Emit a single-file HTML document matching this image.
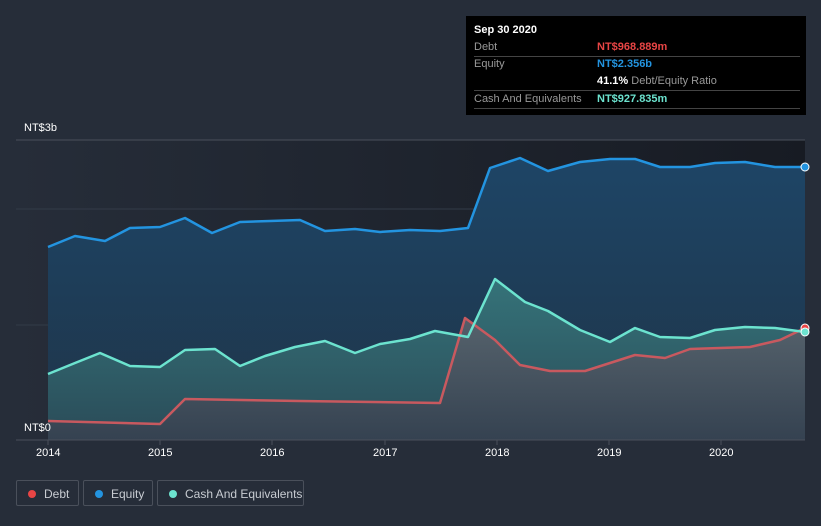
<!DOCTYPE html>
<html><head><meta charset="utf-8"><style>
body{margin:0;width:821px;height:526px;background:#262d39;font-family:"Liberation Sans",sans-serif;overflow:hidden;position:relative}
.tip{position:absolute;left:466px;top:16px;width:340px;height:99px;background:#000;color:#fff;font-size:11px}
.tip .r{position:absolute;left:8px;width:326px;border-bottom:1px solid #444;height:17px;line-height:17px}
.lab{color:#999}
.v{position:absolute;left:123px;top:0;font-weight:bold}
.leg{position:absolute;top:480px;height:26px;border:1px solid #4a505b;border-radius:2px;color:#c8ccd2;font-size:12px;line-height:26px;box-sizing:border-box}
.leg i{display:inline-block;width:8px;height:8px;border-radius:50%;margin:0 8px 0 11px;vertical-align:-0px}
.ax{position:absolute;color:#fff;font-size:11px}
</style></head><body>
<svg width="821" height="526" style="position:absolute;left:0;top:0">
<defs>
<linearGradient id="bg" x1="0" x2="1" y1="0" y2="0"><stop offset="0" stop-color="#262d39"/><stop offset="1" stop-color="#171b23"/></linearGradient>
<linearGradient id="eq" x1="0" x2="0" y1="0" y2="1"><stop offset="0" stop-color="#1e4566"/><stop offset="1" stop-color="#1f3448"/></linearGradient>
<linearGradient id="ca" x1="0" x2="0" y1="0" y2="1"><stop offset="0" stop-color="#357379"/><stop offset="1" stop-color="#2a4b58"/></linearGradient>
<linearGradient id="de" x1="0" x2="0" y1="0" y2="1"><stop offset="0" stop-color="#5a626c"/><stop offset="1" stop-color="#364150"/></linearGradient>
</defs>
<rect x="16" y="140" width="789" height="300" fill="url(#bg)"/>
<line x1="16" y1="140" x2="805" y2="140" stroke="#4a505b"/>
<line x1="16" y1="209" x2="805" y2="209" stroke="#333b48"/>
<line x1="16" y1="325" x2="805" y2="325" stroke="#333b48"/>
<polygon fill="url(#eq)" points="48,440 48,247 75,236 105,241 130,228 160,227 185,218 212,233 240,222 270,221 300,220 325,231 355,229 380,232 410,230 440,231 468,228 490,168 520,158 548,171 580,162 610,159 635,159 660,167 690,167 715,163 745,162 775,167 805,167 805,440"/>
<polygon fill="url(#ca)" points="48,440 48,374 75,363 100,353 130,366 160,367 185,350 215,349 240,366 265,356 295,347 325,341 355,353 380,344 410,339 435,331 468,337 495,279 525,302 548,311 580,330 610,342 635,328 660,337 690,338 715,330 745,327 775,328 805,332 805,440"/>
<polygon fill="url(#de)" fill-opacity="0.9" points="48,440 48,421 160,424 185,399 300,401 440,403 465,318 495,340 520,365 550,371 585,371 610,363 635,355 665,358 690,349 750,347 780,340 805,328 805,440"/>
<g fill="none" stroke-width="2.5" stroke-linejoin="round">
<polyline stroke="#2394e0" points="48,247 75,236 105,241 130,228 160,227 185,218 212,233 240,222 270,221 300,220 325,231 355,229 380,232 410,230 440,231 468,228 490,168 520,158 548,171 580,162 610,159 635,159 660,167 690,167 715,163 745,162 775,167 805,167"/>
<polyline stroke="#c8595f" points="48,421 160,424 185,399 300,401 440,403 465,318 495,340 520,365 550,371 585,371 610,363 635,355 665,358 690,349 750,347 780,340 805,328"/>
<polyline stroke="#6ce3cf" points="48,374 75,363 100,353 130,366 160,367 185,350 215,349 240,366 265,356 295,347 325,341 355,353 380,344 410,339 435,331 468,337 495,279 525,302 548,311 580,330 610,342 635,328 660,337 690,338 715,330 745,327 775,328 805,332"/>
</g>
<circle cx="805" cy="167" r="4" fill="#2394e0" stroke="#fff"/>
<circle cx="805" cy="328" r="4" fill="#e84545" stroke="#fff"/>
<circle cx="805" cy="332" r="4" fill="#6ce3cf" stroke="#fff"/>
<line x1="16" y1="440" x2="805" y2="440" stroke="#4a505b"/>
<g stroke="#4a505b"><line x1="48" y1="440" x2="48" y2="445"/><line x1="160" y1="440" x2="160" y2="445"/><line x1="272" y1="440" x2="272" y2="445"/><line x1="385" y1="440" x2="385" y2="445"/><line x1="497" y1="440" x2="497" y2="445"/><line x1="609" y1="440" x2="609" y2="445"/><line x1="721" y1="440" x2="721" y2="445"/></g>
</svg>
<div class="ax" style="left:24px;top:122px">NT$3b</div>
<div class="ax" style="left:24px;top:422px">NT$0</div>
<div class="ax" style="left:36px;top:447px">2014</div>
<div class="ax" style="left:148px;top:447px">2015</div>
<div class="ax" style="left:260px;top:447px">2016</div>
<div class="ax" style="left:373px;top:447px">2017</div>
<div class="ax" style="left:485px;top:447px">2018</div>
<div class="ax" style="left:597px;top:447px">2019</div>
<div class="ax" style="left:709px;top:447px">2020</div>
<div class="tip">
<div style="position:absolute;left:8px;top:8px;font-weight:bold">Sep 30 2020</div>
<div class="r" style="top:23px"><span class="lab">Debt</span><span class="v" style="color:#e84545">NT$968.889m</span></div>
<div class="r" style="top:40px;height:34px;"><span class="lab">Equity</span><span class="v" style="color:#2394e0">NT$2.356b</span><span class="v" style="top:17px"><b>41.1%</b> <span class="lab" style="font-weight:normal">Debt/Equity Ratio</span></span></div>
<div class="r" style="top:75px"><span class="lab">Cash And Equivalents</span><span class="v" style="color:#6ce3cf">NT$927.835m</span></div>
</div>
<div class="leg" style="left:16px;width:63px"><i style="background:#e84545"></i>Debt</div>
<div class="leg" style="left:83px;width:70px"><i style="background:#2394e0"></i>Equity</div>
<div class="leg" style="left:157px;width:147px"><i style="background:#6ce3cf"></i>Cash And Equivalents</div>
</body></html>
